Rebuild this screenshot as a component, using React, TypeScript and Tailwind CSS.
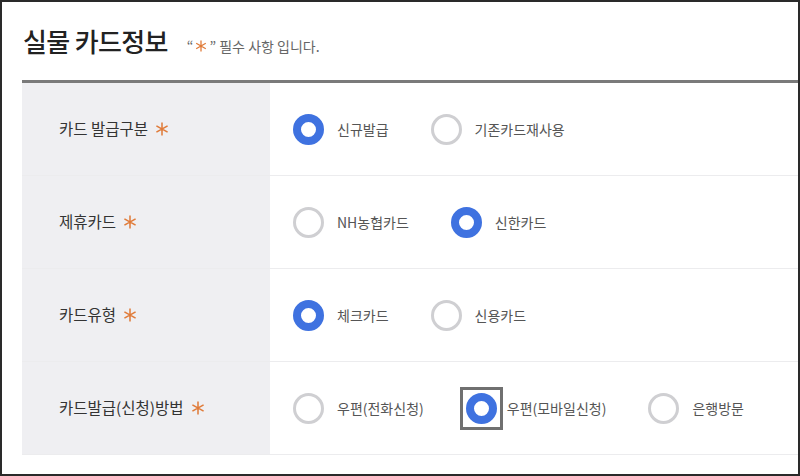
import React from "react";

type Option = { label: string; checked?: boolean; focused?: boolean };
type Row = { title: string; options: Option[] };

const ROWS: Row[] = [
  { title: "카드 발급구분", options: [{ label: "신규발급", checked: true }, { label: "기존카드재사용" }] },
  { title: "제휴카드", options: [{ label: "NH농협카드" }, { label: "신한카드", checked: true }] },
  { title: "카드유형", options: [{ label: "체크카드", checked: true }, { label: "신용카드" }] },
  {
    title: "카드발급(신청)방법",
    options: [
      { label: "우편(전화신청)" },
      { label: "우편(모바일신청)", checked: true, focused: true },
      { label: "은행방문" },
    ],
  },
];

// thin six-pointed required mark
function Star({ size = 13 }: { size?: number }) {
  return (
    <svg width={size} height={size} viewBox="0 0 12 12" className="inline-block" fill="none" stroke="#e07b39" strokeWidth="1.3">
      <path d="M6 0.5v11M1.2 3.25l9.6 5.5M1.2 8.75l9.6-5.5" />
    </svg>
  );
}

function Radio({ label, checked, focused }: Option) {
  const circle = (
    <span
      className={
        "block h-[31px] w-[31px] rounded-full bg-white " +
        (checked ? "border-[8px] border-[#3f72e0]" : "border-[3px] border-[#cfcfd2]")
      }
    />
  );
  return (
    <label className="mr-[42px] flex items-center">
      {focused ? (
        <span className="-ml-[6px] block border-[3px] border-[#707070] p-[3px]">{circle}</span>
      ) : (
        circle
      )}
      <span className={"text-[14px] text-[#555] " + (focused ? "ml-[4px]" : "ml-[13px]")}>{label}</span>
    </label>
  );
}

export default function App() {
  return (
    <div
      className="h-[476px] w-[800px] overflow-hidden border-2 border-[#2a2a2a] bg-white"
      style={{ fontFamily: '"Noto Sans CJK KR", "Noto Sans", sans-serif' }}
    >
      <div className="flex items-baseline pl-[21px] pt-[21px]">
        <h2 className="text-[26px] leading-[36px] font-medium tracking-tight text-[#222]">실물 카드정보</h2>
        <p className="ml-[19px] flex items-center text-[14px] text-[#666]">
          “<span className="relative -top-[1px] mx-[2px] flex"><Star size={12} /></span>” 필수 사항 입니다.
        </p>
      </div>

      <div className="ml-[20px] mt-[21px] border-t-[3px] border-[#7a7a7a]">
        {ROWS.map((row) => (
          <div key={row.title} className="flex h-[93px] border-b border-[#ececee]">
            <div className="flex w-[248px] items-center bg-[#efeff2] pl-[37px] text-[15.5px] text-[#333]">
              {row.title}
              <span className="ml-[7px] flex"><Star size={14} /></span>
            </div>
            <div className="flex flex-1 items-center pl-[23px]">
              {row.options.map((o) => (
                <Radio key={o.label} {...o} />
              ))}
            </div>
          </div>
        ))}
      </div>
    </div>
  );
}
